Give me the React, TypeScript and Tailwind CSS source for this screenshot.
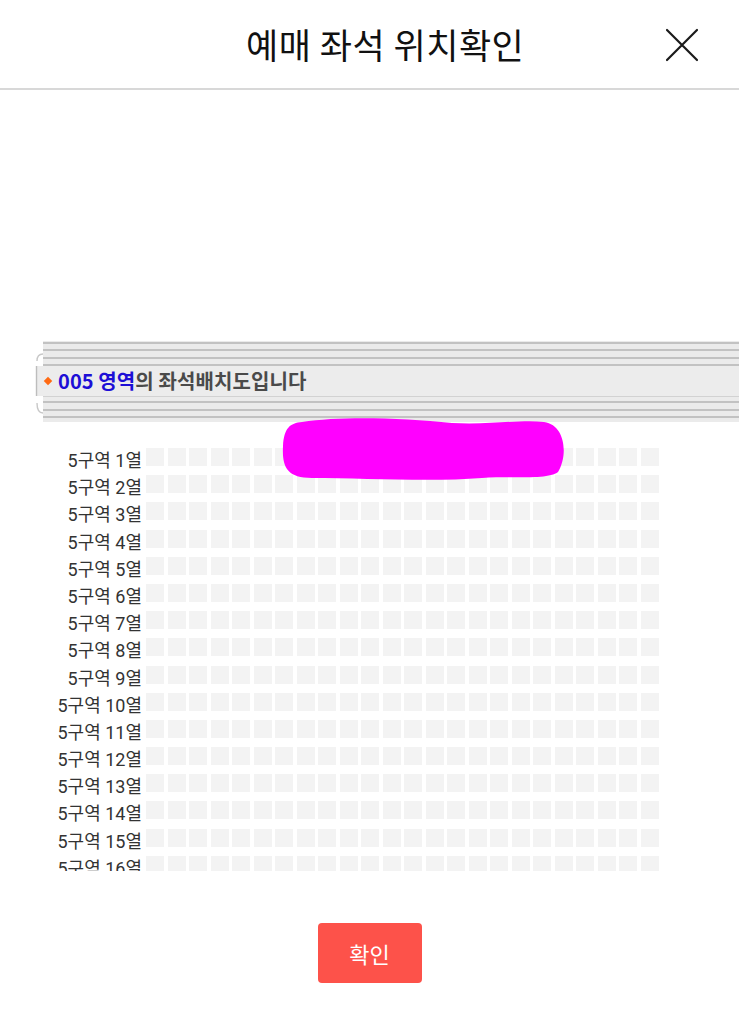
import React from "react"

const ROWS = Array.from({ length: 16 }, (_, i) => i + 1)
const COLS = Array.from({ length: 24 }, (_, i) => i)

const CloseIcon = () => (
  <svg width="34" height="34" viewBox="0 0 34 34" aria-label="닫기">
    <path d="M2 2 L32 32 M32 2 L2 32" stroke="#1a1a1a" strokeWidth="2.2" strokeLinecap="round" />
  </svg>
)

// 줄무늬 한 줄 (회색 선)
const Line = ({ light }: { light?: boolean }) => (
  <div className={light ? "h-[1px] bg-[#d2d2d2]" : "h-[2px] bg-[#c2c2c2]"} />
)
const Gap = ({ h }: { h: string }) => <div className={`${h} bg-[#ebebeb]`} />

const Banner = () => (
  <div className="ml-[35px] flex">
    {/* 왼쪽 괄호 모양 장식 */}
    <div className="w-[8px] shrink-0">
      <svg width="8" height="81" viewBox="0 0 8 81">
        <path d="M8 13 Q2 13 2 20" fill="none" stroke="#c8c8c8" strokeWidth="1.4" />
        <rect x="1.5" y="25" width="6.5" height="30" fill="#ececec" />
        <path d="M1.5 25 L1.5 55" stroke="#bdbdbd" strokeWidth="1.4" />
        <path d="M2 62 Q2 72 8 72" fill="none" stroke="#c8c8c8" strokeWidth="1.4" />
      </svg>
    </div>
    <div className="flex-1 flex flex-col">
      <Gap h="h-[1px]" />
      <Line />
      <Gap h="h-[5px]" />
      <Line />
      <Gap h="h-[6px]" />
      <Line />
      <Gap h="h-[5px]" />
      <Line />
      <div className="h-[30px] bg-[#ececec] flex items-center pl-[2px]">
        <span className="w-[6px] h-[6px] rotate-45 bg-[#ff6a13] mr-[7px]" />
        <span className="font-['Noto_Sans_CJK_KR',sans-serif] font-bold text-[20px] tracking-[0.1px] text-[#4a4a4a] leading-none">
          <span className="text-[#1d0fd6]">005 영역</span>의 좌석배치도입니다
        </span>
      </div>
      <Line light />
      <Gap h="h-[4px]" />
      <Line />
      <Gap h="h-[6px]" />
      <Line />
      <Gap h="h-[5px]" />
      <Line />
      <Gap h="h-[4px]" />
    </div>
  </div>
)

const Blob = () => (
  <svg width="285" height="66" viewBox="0 0 285 66" className="absolute left-[282px] top-[-32px]">
    <path
      d="M20 6 C60 0 120 2 170 7 C210 9 240 3 262 6 C284 9 286 40 276 56 C266 64 230 60 200 62 C150 66 80 62 30 62 C4 62 0 50 1 30 C2 12 8 7 20 6 Z"
      fill="#ff00ff"
    />
  </svg>
)

const SeatGrid = () => (
  <div className="relative mt-[26px]">
    <div className="h-[423px] overflow-hidden">
      {ROWS.map((r) => (
        <div key={r} className="flex items-start h-[27.2px]">
          <div className="w-[143px] pr-[1px] text-right text-[18px] leading-[26px] text-[#333] font-['Roboto','Noto_Sans_CJK_KR',sans-serif] whitespace-nowrap">
            5구역 {r}열
          </div>
          <div className="ml-[3px] flex gap-x-[3.5px]">
            {COLS.map((c) => (
              <div key={c} className="w-[18px] h-[18px] bg-[#f3f3f3]" />
            ))}
          </div>
        </div>
      ))}
    </div>
    <Blob />
  </div>
)

export default function App() {
  return (
    <div className="w-[739px] min-h-[1024px] bg-white font-['Noto_Sans_CJK_KR',sans-serif]">
      <header className="h-[90px] border-b-2 border-[#d8d8d8] flex items-center">
        <h1 className="ml-[246px] text-[35px] font-normal text-[#111] tracking-[0.5px]">예매 좌석 위치확인</h1>
        <button className="ml-auto mr-[40px] mt-[2px]">
          <CloseIcon />
        </button>
      </header>

      <div className="mt-[251px]">
        <Banner />
      </div>

      <SeatGrid />

      <div className="mt-[52px] flex justify-center">
        <button className="w-[104px] h-[60px] rounded-[4px] bg-[#fd524a] text-white text-[22px] font-['Noto_Sans_CJK_KR',sans-serif]">
          확인
        </button>
      </div>
    </div>
  )
}
